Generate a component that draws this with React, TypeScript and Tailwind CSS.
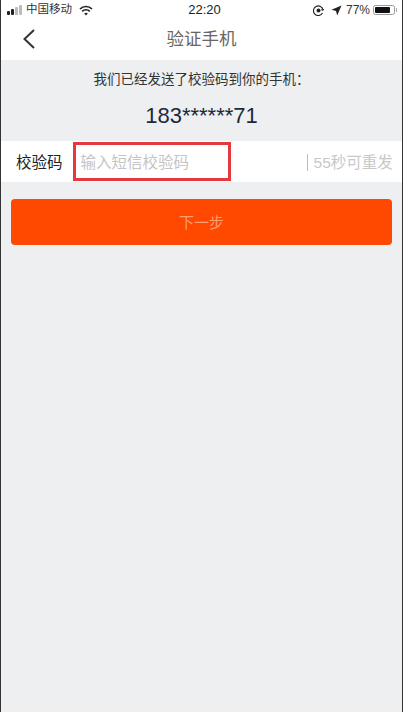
const CJK = "font-['Liberation_Sans','Noto_Sans_CJK_SC',sans-serif]";

function SignalBars() {
  return (
    <div className="flex items-end gap-[1px]">
      <span className="h-[4px] w-[3px] rounded-[1px] bg-[#222]" />
      <span className="h-[6px] w-[3px] rounded-[1px] bg-[#222]" />
      <span className="h-[8px] w-[3px] rounded-[1px] bg-[#bbb]" />
      <span className="h-[10px] w-[3px] rounded-[1px] bg-[#bbb]" />
    </div>
  );
}

function StatusBar() {
  return (
    <div className="flex h-5 items-center bg-white pl-[6px] pr-[5px] text-[#333]">
      <div className="flex flex-1 items-center">
        <SignalBars />
        <span className="ml-[4px] text-[11.5px]">中国移动</span>
        <svg className="ml-[7px]" width="14" height="11" viewBox="0 0 14 11" fill="none" stroke="#222" strokeWidth="1.7">
          <path d="M1 4a8.5 8.5 0 0 1 12 0" />
          <path d="M3.2 6.3a5.4 5.4 0 0 1 7.6 0" />
          <path d="M7 10.5 5.2 8.5a2.6 2.6 0 0 1 3.6 0z" fill="#222" stroke="none" />
        </svg>
      </div>
      <span className="ml-[5px] text-[13px] font-medium text-[#222]">22:20</span>
      <div className="flex flex-1 items-center justify-end">
        <svg width="11" height="11" viewBox="0 0 11 11" fill="none" stroke="#222" strokeWidth="1.1">
          <path d="M9.5 8A4.8 4.8 0 1 1 10 5" />
          <circle cx="5.5" cy="5.5" r="2" fill="#222" stroke="none" />
          <path d="M8 4.5 10 5.5 11 3.8" strokeWidth="0.9" />
        </svg>
        <svg className="ml-[7px]" width="11" height="11" viewBox="0 0 11 11">
          <path d="M10.5.5 6.2 10.5 5 6 .5 4.8z" fill="#222" />
        </svg>
        <span className="ml-[4px] text-[12px] text-[#333]">77%</span>
        <div className="ml-[3px] flex items-center">
          <div className="h-[10px] w-[22px] rounded-[2.5px] border border-[#999] p-[1px]">
            <div className="h-full w-[15px] rounded-[1px] bg-[#111]" />
          </div>
          <span className="ml-[1px] h-[4px] w-[1px] bg-[#aaa]" />
        </div>
      </div>
    </div>
  );
}

function NavBar() {
  return (
    <div className="relative flex h-10 items-center justify-center bg-white">
      <svg className="absolute left-[21px] top-[8px]" width="14" height="22" viewBox="0 0 14 22" fill="none" stroke="#333" strokeWidth="2">
        <path d="M12 2 2.5 11 12 20" />
      </svg>
      <span className="pb-[1px] text-[17.5px] text-[#6b6660]">验证手机</span>
    </div>
  );
}

export default function App() {
  return (
    <div className={`relative flex h-[712px] w-[403px] flex-col overflow-hidden border-x border-x-[#333] bg-[#eeeff0] ${CJK}`}>
      <StatusBar />
      <NavBar />
      <div className="flex h-[81px] flex-col items-center">
        <p className="mt-[11px] text-[13.5px] leading-[17px] text-[#333]">我们已经发送了校验码到你的手机：</p>
        <p className="mt-[14px] text-[22px] leading-[28px] text-[#1c2a3a]">183******71</p>
      </div>
      <div className="flex h-[41px] items-center bg-white">
        <span className="ml-[15px] pt-[2px] text-[15.5px] text-[#222]">校验码</span>
        <div className="ml-[10px] flex h-[39px] w-[158px] items-center border-[3px] border-[#e5393e] pl-[5px] pt-[2px] text-[15.5px] text-[#c4c4c4]">
          输入短信校验码
        </div>
        <div className="ml-[76px] flex items-center pt-[2px] text-[15.5px] text-[#c8c8c8]">
          <span className="mr-[6px] h-[17px] w-px bg-[#bbb]" />
          55秒可重发
        </div>
      </div>
      <div className="mx-[10px] mt-[17px] flex h-[46px] items-center justify-center rounded-[4px] bg-[#ff4800] pt-[2px] text-[15px] text-[#ff9d73]">
        下一步
      </div>
    </div>
  );
}
